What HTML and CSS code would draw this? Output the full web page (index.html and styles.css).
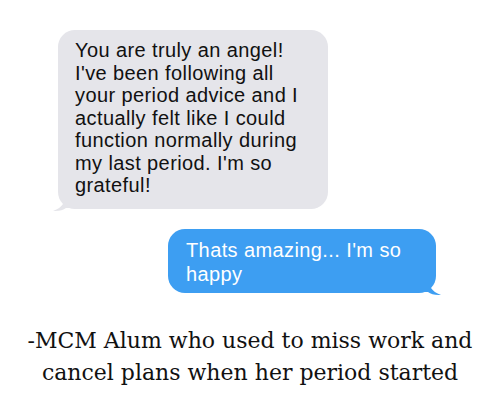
FILE: index.html
```html
<!DOCTYPE html>
<html lang="en">
<head>
    <meta charset="UTF-8">
    <title>Testimonial</title>
    <link rel="stylesheet" href="styles.css">
</head>
<body>
    <div class="page">
        <div class="chat">
            <!-- Received message -->
            <div class="bubble bubble-in">
                You are truly an angel! I've been following all your period advice and I actually felt like I could function normally during my last period. I'm so grateful!
                <svg class="tail tail-in" width="20" height="16" viewBox="0 0 20 16">
                    <path d="M12 0 L12 8 C10 11 7 13 2 15 C8 15.5 12 14 15 12 L20 12 L20 0 Z" fill="#e5e5ea"/>
                </svg>
            </div>
            <!-- Sent message -->
            <div class="bubble bubble-out">
                Thats amazing... I'm so happy
                <svg class="tail tail-out" width="20" height="16" viewBox="0 0 20 16">
                    <path d="M8 0 L8 8 C10 11 13 13 18 15 C12 15.5 8 14 5 12 L0 12 L0 0 Z" fill="#3d9ef2"/>
                </svg>
            </div>
        </div>
        <p class="caption">-MCM Alum who used to miss work and cancel plans when her period started</p>
    </div>
</body>
</html>
```

FILE: styles.css
```css
body {
    margin: 0;
    background-color: #ffffff;
    font-family: "Liberation Sans", Arial, sans-serif;
}

.page {
    width: 500px;
    height: 400px;
    padding-top: 30px;
    box-sizing: border-box;
}

/* Chat bubbles */
.chat {
    display: flex;
    flex-direction: column;
}

.bubble {
    position: relative;
    border-radius: 17px;
    font-size: 20px;
    letter-spacing: 0.4px;
    line-height: 22.5px;
    box-sizing: border-box;
}

.bubble-in {
    align-self: flex-start;
    margin-left: 58px;
    width: 270px;
    padding: 9px 14px 12px 17px;
    background-color: #e5e5ea;
    color: #111111;
}

.bubble-out {
    align-self: flex-end;
    margin-top: 20px;
    margin-right: 64px;
    width: 268px;
    padding: 9px 14px 7px 18px;
    background-color: #3d9ef2;
    color: #ffffff;
    line-height: 24px;
}

.tail {
    position: absolute;
    bottom: -3px;
}

.tail-in {
    left: -7px;
}

.tail-out {
    right: -7px;
}

/* Caption */
.caption {
    margin: 32px 0 0;
    text-align: center;
    font-family: "DejaVu Serif", Georgia, serif;
    font-size: 22px;
    line-height: 32px;
    color: #111111;
}
```
